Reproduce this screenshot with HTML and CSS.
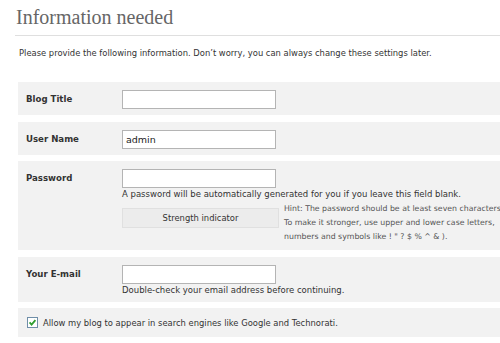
FILE: index.html
```html
<!DOCTYPE html>
<html lang="en">
<head>
    <meta charset="UTF-8">
    <title>Information needed</title>
    <link rel="stylesheet" href="styles.css">
</head>
<body>
    <div id="page">
        <h1>Information needed</h1>
        <p class="intro">Please provide the following information. Don&#8217;t worry, you can always change these settings later.</p>
        <div class="row">
            <div class="label">Blog Title</div>
            <div class="field"><input type="text" class="box"></div>
        </div>
        <div class="row">
            <div class="label">User Name</div>
            <div class="field"><input type="text" class="box" value="admin"></div>
        </div>
        <div class="row pass">
            <div class="label">Password</div>
            <div class="field">
                <input type="text" class="box">
                <div class="desc">A password will be automatically generated for you if you leave this field blank.</div>
                <div class="strength">
                    <div class="meter">Strength indicator</div>
                    <div class="hint">Hint: The password should be at least seven characters long.<br>To make it stronger, use upper and lower case letters,<br>numbers and symbols like ! " ? $ % ^ &amp; ).</div>
                </div>
            </div>
        </div>
        <div class="row mail">
            <div class="label">Your E-mail</div>
            <div class="field">
                <input type="text" class="box">
                <div class="desc">Double-check your email address before continuing.</div>
            </div>
        </div>
        <div class="row check">
            <svg class="tick" width="11" height="11" viewBox="0 0 11 11">
                <rect x="0.5" y="0.5" width="10" height="10" fill="#fff" stroke="#6f8ea8"/>
                <path d="M2.6 5.4 L4.6 7.6 L8.4 3.2" fill="none" stroke="#2f9e2f" stroke-width="1.8"/>
            </svg>
            <span>Allow my blog to appear in search engines like Google and Technorati.</span>
        </div>
    </div>
</body>
</html>
```

FILE: styles.css
```css
body{
    margin:0;
    background:#fff;
    font-family:"DejaVu Sans", Verdana, sans-serif;
    font-size:8.4px;
    color:#333;
    overflow:hidden;
}
#page{
    width:500px;
    overflow:hidden;
}
h1{
    font-family:"Liberation Serif", Georgia, serif;
    font-weight:normal;
    font-size:20px;
    color:#666;
    margin:0 0 0 15px;
    padding:6px 0 0 1px;
    height:29px;
    border-bottom:1px solid #dfdfdf;
}
.intro{
    margin:12px 0 0 19px;
    height:10px;
    line-height:10px;
    white-space:nowrap;
}
.row{
    display:flex;
    margin:24px 0 0 18px;
    background:#f2f2f2;
    padding:8px 0 6px;
}
.row + .row{
    margin-top:7px;
}
.label{
    width:96px;
    padding-left:8px;
    font-weight:bold;
    font-size:8.6px;
    line-height:19px;
    color:#333;
    flex:none;
}
.field{
    flex:1;
    min-width:0;
}
.box{
    display:block;
    box-sizing:border-box;
    width:154px;
    height:19px;
    margin:0;
    padding:0 3px;
    border:1px solid #b4b4b4;
    background:#fff;
    font-family:"DejaVu Sans", Verdana, sans-serif;
    font-size:9.5px;
    color:#222;
    outline:none;
}
.desc{
    font-size:8.5px;
    line-height:11px;
    margin-top:1px;
    white-space:nowrap;
}
.strength{
    display:flex;
    align-items:flex-start;
    margin-top:8px;
}
.meter{
    box-sizing:border-box;
    width:157px;
    height:20px;
    flex:none;
    background:#ececec;
    border:1px solid #e0e0e0;
    text-align:center;
    line-height:18px;
    color:#333;
}
.hint{
    margin:-6px 0 0 5px;
    font-size:7.8px;
    line-height:14px;
    color:#555;
    white-space:nowrap;
}
.pass{
    height:75px;
}
.row.pass{
    margin-top:6px;
}
.mail{
    height:31px;
}
.row.mail{
    margin-top:7px;
}
.check{
    align-items:center;
    height:29px;
    padding:0;
}
.row.check{
    margin-top:6px;
}
.tick{
    margin-left:9px;
    margin-right:5px;
    flex:none;
}
```
